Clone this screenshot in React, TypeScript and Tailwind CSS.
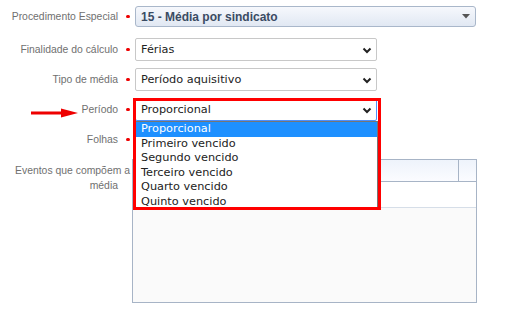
const labelCls = 'w-[118px] shrink-0 text-right text-[10.4px] text-[#707070] font-["Liberation_Sans",Arial,sans-serif]'
const fieldFont = 'font-["DejaVu_Sans",Verdana,sans-serif] text-[11.3px] text-[#222]'

function Dot() {
  return <span className="ml-[8px] mr-[5px] w-[4px] h-[3px] rounded-full bg-[#ee0000] shrink-0" />
}

function Chevron() {
  return (
    <svg width="10" height="7" viewBox="0 0 10 7" className="shrink-0">
      <path d="M1.5 1.5 L5 5 L8.5 1.5" fill="none" stroke="#222" strokeWidth="2" />
    </svg>
  )
}

function PlainSelect({ value, focused }: { value: string; focused?: boolean }) {
  return (
    <div
      className={`w-[242px] h-[23px] flex items-center justify-between pl-[5px] pr-[4px] pt-[1px] rounded-[2px] bg-white border ${
        focused ? 'border-[#4d90fe]' : 'border-[#c8c8c8]'
      } ${fieldFont}`}
    >
      <span>{value}</span>
      <Chevron />
    </div>
  )
}

function Row({ label, children, className = '' }: { label: string; children?: React.ReactNode; className?: string }) {
  return (
    <div className={`flex items-center ${className}`}>
      <div className={labelCls}>{label}</div>
      <Dot />
      {children}
    </div>
  )
}

const opcoes = ['Proporcional', 'Primeiro vencido', 'Segundo vencido', 'Terceiro vencido', 'Quarto vencido', 'Quinto vencido']

export default function App() {
  return (
    <main className="relative w-[525px] h-[315px] overflow-hidden bg-white">
      <div className="flex flex-col pt-[6px]">
        <Row label="Procedimento Especial">
          <div className="w-[341px] h-[21px] flex items-center justify-between pl-[5px] pr-[5px] rounded-[3px] border border-[#a9b7ca] bg-gradient-to-b from-[#f6f8fc] to-[#e1e8f3] font-['Liberation_Sans',Arial,sans-serif] text-[12px] font-bold text-[#3a4b63]">
            <span>15 - Média por sindicato</span>
            <svg width="8" height="5" viewBox="0 0 8 5">
              <path d="M0 0 H8 L4 4.5 Z" fill="#555" />
            </svg>
          </div>
        </Row>

        <Row label="Finalidade do cálculo" className="mt-[11px]">
          <PlainSelect value="Férias" />
        </Row>

        <Row label="Tipo de média" className="mt-[7px]">
          <PlainSelect value="Período aquisitivo" />
        </Row>

        <Row label="Período" className="mt-[7px]">
          <PlainSelect value="Proporcional" focused />
        </Row>

        <Row label="Folhas" className="mt-[7px]">
          <div className="w-[242px] h-[23px] rounded-[2px] border border-[#c8c8c8] bg-white" />
        </Row>

        <div className="flex mt-[8px]">
          <div className={`${labelCls} pt-[4px] leading-[15px]`}>
            <div className="whitespace-nowrap -mr-[12px]">Eventos que compõem a</div>
            <div>média</div>
          </div>
          <div className="ml-[14px] w-[345px] h-[144px] border border-[#a7b4c6] bg-[#fafafa] flex flex-col">
            <div className="h-[22px] flex border-b border-[#a7b4c6] bg-gradient-to-b from-[#eef3fb] to-[#fbfcff]">
              <div className="flex-1 border-r border-[#a7b4c6]" />
              <div className="w-[17px]" />
            </div>
            <div className="h-[26px] bg-white border-b border-[#d6dee8]" />
          </div>
        </div>
      </div>

      {/* aberta: lista do select Período */}
      <ul className={`absolute left-[135px] top-[121px] w-[243px] bg-white border border-[#767676] ${fieldFont}`}>
        {opcoes.map((o, i) => (
          <li
            key={o}
            className={`h-[14.5px] leading-[14.5px] pl-[5px] whitespace-nowrap ${i === 0 ? 'bg-[#1e90ff] text-white' : ''}`}
          >
            {o}
          </li>
        ))}
      </ul>

      {/* destaque vermelho */}
      <div className="absolute left-[133px] top-[98px] w-[248px] h-[112px] border-[3px] border-[#ff0000] pointer-events-none" />

      <svg className="absolute left-[30px] top-[108px]" width="50" height="10" viewBox="0 0 50 10">
        <rect x="1" y="3.5" width="33" height="3" fill="#ee0000" />
        <path d="M31 0.5 L48 5 L31 9.5 Z" fill="#ee0000" />
      </svg>
    </main>
  )
}
